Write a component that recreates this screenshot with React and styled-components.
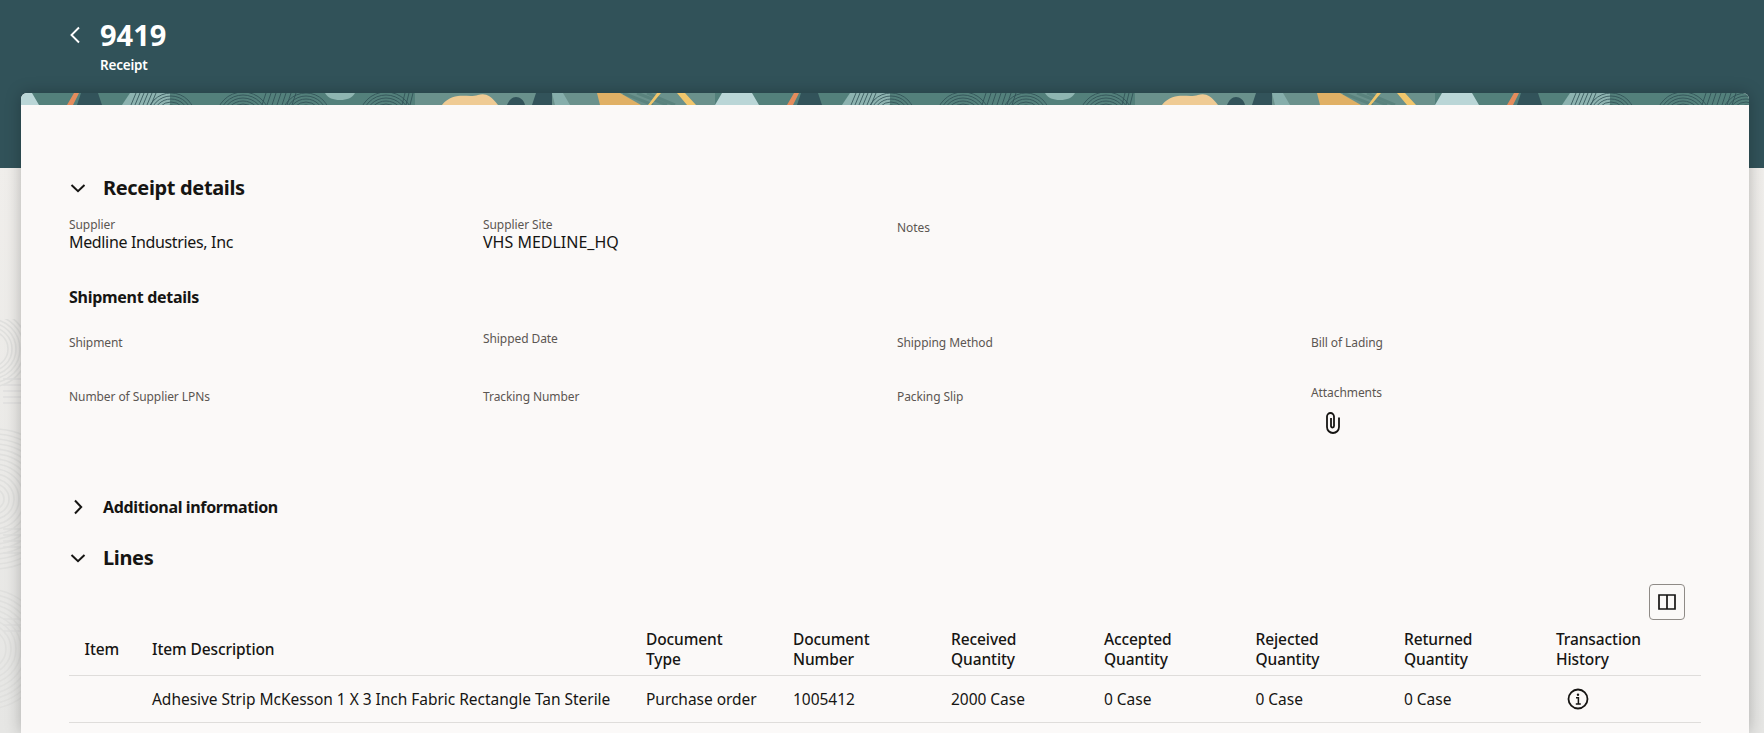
import React from 'react';
import styled, { createGlobalStyle } from 'styled-components';

const GlobalStyle = createGlobalStyle`
  html, body, #root {
    margin: 0;
    height: 100%;
    overflow: hidden;
  }
  body {
    font-family: "Noto Sans", "Liberation Sans", sans-serif;
    color: #161513;
  }
`;

const Page = styled.div`
  position: relative;
  height: 733px;
  overflow: hidden;
  background: linear-gradient(180deg, #f1efec 0, #f0eeeb 160px, #e6e6e4 733px);
`;

const Backdrop = styled.svg`
  position: absolute;
  left: 0;
  top: 319px;
`;

const Header = styled.header`
  box-sizing: border-box;
  height: 168px;
  background: #315259;
  color: #fff;
  display: flex;
  align-items: flex-start;
  padding: 19px 0 0 69px;
`;

const BackButton = styled.div`
  width: 31px;
  height: 32px;
  display: flex;
  align-items: center;
`;

const TitleBlock = styled.div`
  display: flex;
  flex-direction: column;
`;

const Title = styled.h1`
  margin: 0;
  font-size: 29px;
  line-height: 32px;
  font-weight: 700;
`;

const Subtitle = styled.div`
  margin-top: 6px;
  font-size: 13.5px;
  line-height: 16px;
  font-weight: 600;
  letter-spacing: -0.2px;
`;

const Card = styled.main`
  position: relative;
  margin: -75px 15px 0 21px;
  border-radius: 6px 6px 0 0;
  overflow: hidden;
  background: #fbf9f8;
  box-shadow: 0 0 16px rgba(0, 0, 0, 0.25);
  height: 640px;
`;

const Banner = styled.svg`
  display: block;
  width: 100%;
  height: 12px;
`;

const Body = styled.div`
  padding: 69px 48px 0;
`;

const Heading = styled.div`
  display: flex;
  align-items: center;
  gap: 16px;
  margin-top: ${p => p.$top || 0}px;
`;

const Toggle = styled.svg`
  width: 18px;
  height: 18px;
  flex: none;
`;

const SectionTitle = styled.h2`
  margin: 0;
  font-size: ${p => p.$size || 20}px;
  line-height: ${p => (p.$size ? 24 : 28)}px;
  font-weight: 700;
  letter-spacing: -0.35px;
`;

const FieldGrid = styled.div`
  display: grid;
  grid-template-columns: repeat(4, 414px);
  row-gap: ${p => p.$gap || 0}px;
  margin-top: ${p => p.$top}px;
  height: ${p => p.$height || 'auto'};
`;

const Field = styled.div`
  padding-top: ${p => p.$offset || 0}px;
`;

const Label = styled.div`
  font-size: 12px;
  line-height: 15px;
  color: #5b5652;
  letter-spacing: -0.08px;
`;

const Value = styled.div`
  margin-top: 1px;
  font-size: 16px;
  line-height: 18px;
  letter-spacing: ${p => p.$spacing}px;
`;

const SubTitle = styled.h3`
  margin: 0;
  font-size: 16px;
  line-height: 22px;
  font-weight: 700;
  letter-spacing: -0.28px;
`;

const IconButton = styled.div`
  width: 44px;
  height: 44px;
  margin-top: 1px;
  display: flex;
  align-items: center;
  justify-content: center;
`;

const Toolbar = styled.div`
  display: flex;
  justify-content: flex-end;
  margin: 12px 16px 0 0;
`;

const ColumnsButton = styled.div`
  box-sizing: border-box;
  width: 36px;
  height: 36px;
  border: 1px solid #8f8b87;
  border-radius: 4px;
  display: flex;
  align-items: center;
  justify-content: center;
`;

const Row = styled.div`
  display: grid;
  grid-template-columns: 83px 494px 147px 158px 153px 151.5px 148.5px 152px 130px;
  align-items: center;
  border-bottom: 1px solid #dfdddb;
  box-sizing: border-box;
`;

const HeadRow = styled(Row)`
  height: 56px;
  padding-top: 2px;
`;

const BodyRow = styled(Row)`
  height: 47px;
`;

const HeadCell = styled.div`
  font-size: 15.5px;
  line-height: 20px;
  font-weight: 500;
  padding-left: ${p => (p.$first ? 15.5 : 0)}px;
  white-space: pre-line;
  letter-spacing: -0.1px;
`;

const Cell = styled.div`
  font-size: 15.5px;
  line-height: 20px;
  letter-spacing: -0.03px;
  white-space: nowrap;
`;

const InfoWrap = styled.div`
  padding-left: 11px;
  height: 22px;
`;

const ChevronDown = () => (
  <Toggle viewBox="0 0 18 18">
    <path d="M2.5 6 9 12.2 15.5 6" fill="none" stroke="#161513" strokeWidth="2" />
  </Toggle>
);

const ChevronRight = () => (
  <Toggle viewBox="0 0 18 18">
    <path d="M6 2.5 12.2 9 6 15.5" fill="none" stroke="#161513" strokeWidth="2" />
  </Toggle>
);

const arcs = (cx, cy, from, to, step) => {
  const out = [];
  for (let r = from; r <= to; r += step) out.push(<circle key={r} cx={cx} cy={cy} r={r} />);
  return out;
};

// one tile of the banner, 720px wide, x counted from the card's left edge
const BannerArt = () => (
  <Banner aria-hidden="true">
    <defs>
      <pattern id="tile" width="720" height="12" patternUnits="userSpaceOnUse">
        <rect width="720" height="12" fill="#53807b" />
        <rect x="394" width="300" height="12" fill="#6a918c" />
        <path d="M-26 0h37l7 12h-54zM694 12l7-12h37l7 12z" fill="#bad6d7" />
        <path d="M53 0h5l-6 12h-6zM773 0h5l-6 12h-6z" fill="#e48c5c" />
        <path d="M60 0h17l4 12H56z" fill="#32535a" />
        <path d="M109 0h40v12h-48z" fill="#8db3b0" />
        <path d="M304 0h30c-3 5-8 7-15 7s-12-2-15-7z" fill="#8fb5b1" />
        <g fill="none" stroke="#2c4d52" strokeWidth=".9" opacity=".9">
          <g>{arcs(150, 24, 12, 26, 3)}</g>
          <g>{arcs(222, 26, 15, 28, 3)}</g>
          <g>{arcs(285, 24, 12, 26, 3)}</g>
          <g>{arcs(365, 26, 15, 28, 3)}</g>
          <path d="M115 0l-5 12M119 0l-5 12M123 0l-5 12M127 0l-5 12M131 0l-5 12M135 0l-5 12M245 0l-4 12M250 0l-4 12M255 0l-4 12M260 0l-4 12M265 0l-4 12M270 0l-4 12M275 0l-4 12M384 0l-3 12M388 0l-3 12M392 0l-3 12" />
        </g>
        <path d="M421 12c3-4 8-8 16-9 6-1 14 1 20-1 6-2 12-1 20 10z" fill="#efcb94" />
        <path d="M486 12c2-5 5-8 9-8s8 3 9 8z" fill="#32535a" />
        <path d="M515 0h16v12h-20z" fill="#32535a" />
        <path d="M531 0h11l7 12h-15z" fill="#86aeab" />
        <path d="M602 0l30 12M616 0l30 12M626 0l28 12" stroke="#5a837e" strokeWidth="3" fill="none" />
        <path d="M576 0h23l21 12h-41z" fill="#e0b065" />
        <path d="M640 0h-4l-9 12h3zM656 0h8l11 12h-9z" fill="#f1c66c" />
      </pattern>
    </defs>
    <rect width="100%" height="12" fill="url(#tile)" />
  </Banner>
);

const BackdropArt = () => (
  <Backdrop width="24" height="390" fill="none" stroke="#e0e0de" strokeWidth="1.6" aria-hidden="true">
    <g>{arcs(-10, 30, 18, 40, 4)}</g>
    <g>{arcs(-6, 180, 10, 70, 5)}</g>
    <g>{arcs(-14, 330, 20, 60, 5)}</g>
    <path d="M3 60h21M3 66h21M3 72h21M3 78h21M3 84h21M3 210h21M3 216h21M3 222h21M3 228h21M3 234h21M3 300h21M3 306h21M3 312h21" />
  </Backdrop>
);

const columns = [
  'Item',
  'Item Description',
  'Document\nType',
  'Document\nNumber',
  'Received\nQuantity',
  'Accepted\nQuantity',
  'Rejected\nQuantity',
  'Returned\nQuantity',
  'Transaction\nHistory',
];

const cells = [
  '',
  'Adhesive Strip McKesson 1 X 3 Inch Fabric Rectangle Tan Sterile',
  'Purchase order',
  '1005412',
  '2000 Case',
  '0 Case',
  '0 Case',
  '0 Case',
];

export default function App() {
  return (
    <Page>
      <GlobalStyle />
      <BackdropArt />
      <Header>
        <BackButton>
          <svg width="12" height="18" viewBox="0 0 12 18">
            <path d="M10 1.500 2.500 9l7.500 7.500" fill="none" stroke="#fff" strokeWidth="1.9" />
          </svg>
        </BackButton>
        <TitleBlock>
          <Title>9419</Title>
          <Subtitle>Receipt</Subtitle>
        </TitleBlock>
      </Header>
      <Card>
        <BannerArt />
        <Body>
          <Heading>
            <ChevronDown />
            <SectionTitle>Receipt details</SectionTitle>
          </Heading>
          <FieldGrid $top={15} $height="69px">
            <Field>
              <Label>Supplier</Label>
              <Value $spacing={-0.35}>Medline Industries, Inc</Value>
            </Field>
            <Field>
              <Label>Supplier Site</Label>
              <Value $spacing={0}>VHS MEDLINE_HQ</Value>
            </Field>
            <Field $offset={3}>
              <Label>Notes</Label>
            </Field>
          </FieldGrid>
          <SubTitle>Shipment details</SubTitle>
          <FieldGrid $top={23} $gap={35}>
            <Field $offset={4}><Label>Shipment</Label></Field>
            <Field><Label>Shipped Date</Label></Field>
            <Field $offset={4}><Label>Shipping Method</Label></Field>
            <Field $offset={4}><Label>Bill of Lading</Label></Field>
            <Field $offset={4}><Label>Number of Supplier LPNs</Label></Field>
            <Field $offset={4}><Label>Tracking Number</Label></Field>
            <Field $offset={4}><Label>Packing Slip</Label></Field>
            <Field>
              <Label>Attachments</Label>
              <IconButton>
                <svg width="16" height="22" viewBox="0 0 16 22">
                  <path
                    d="M14 5.500V15a6 6 0 0 1-12 0V4.500a3.500 3.500 0 0 1 7 0V14a1.500 1.500 0 0 1-3 0V6"
                    fill="none"
                    stroke="#161513"
                    strokeWidth="1.800"
                  />
                </svg>
              </IconButton>
            </Field>
          </FieldGrid>
          <Heading $top={50}>
            <ChevronRight />
            <SectionTitle $size={16}>Additional information</SectionTitle>
          </Heading>
          <Heading $top={25}>
            <ChevronDown />
            <SectionTitle>Lines</SectionTitle>
          </Heading>
          <Toolbar>
            <ColumnsButton>
              <svg width="18" height="18" viewBox="0 0 18 18">
                <path d="M1 2h16v14H1zM9 2v14" fill="none" stroke="#161513" strokeWidth="1.7" />
              </svg>
            </ColumnsButton>
          </Toolbar>
          <HeadRow>
            {columns.map((c, i) => (
              <HeadCell key={c} $first={i === 0}>{c}</HeadCell>
            ))}
          </HeadRow>
          <BodyRow>
            {cells.map((c, i) => (
              <Cell key={i}>{c}</Cell>
            ))}
            <InfoWrap>
              <svg width="22" height="22" viewBox="0 0 22 22">
                <circle cx="11" cy="11" r="9.500" fill="none" stroke="#161513" strokeWidth="1.800" />
                <circle cx="11" cy="6.700" r="1.200" fill="#161513" />
                <path d="M9 9.800h2.400v6M8.800 16h5" fill="none" stroke="#161513" strokeWidth="1.500" />
              </svg>
            </InfoWrap>
          </BodyRow>
        </Body>
      </Card>
    </Page>
  );
}
